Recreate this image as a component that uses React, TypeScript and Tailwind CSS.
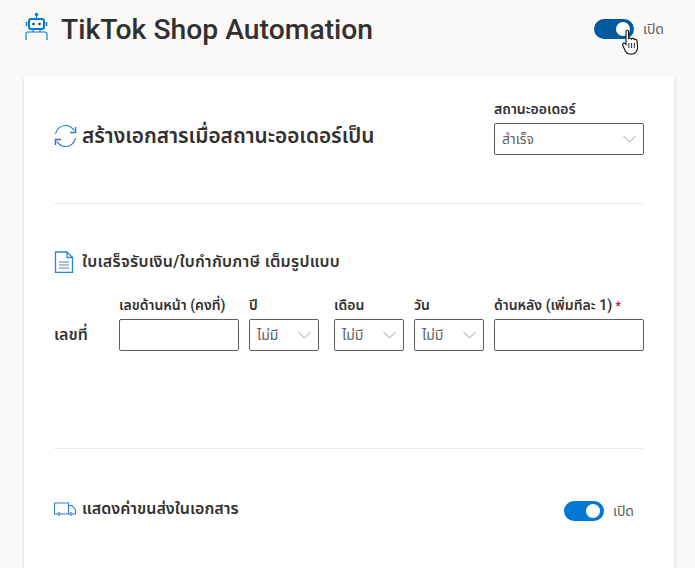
import React from 'react';

const FONT = "font-['Roboto','Noto_Sans_Thai','Noto_Sans',sans-serif]";

// Fluent-style chevron used by the dropdowns
function Chevron() {
  return (
    <svg width="13" height="8" viewBox="0 0 13 8" fill="none" className="shrink-0">
      <path d="M.5 1l6 6 6-6" stroke="#a19f9d" strokeWidth="1" />
    </svg>
  );
}

function Select({ value }: { value: string }) {
  return (
    <div className="h-8 flex items-center justify-between pl-[7px] pr-[7px] border border-[#605e5c] rounded-[2px] bg-white text-[14px] text-[#605e5c]">
      <span>{value}</span>
      <Chevron />
    </div>
  );
}

function Toggle({ color, label }: { color: string; label: string }) {
  return (
    <div className="flex items-center gap-[9px]">
      <div className={`w-10 h-5 rounded-full flex items-center justify-end pr-1 ${color}`}>
        <div className="w-3.5 h-3.5 rounded-full bg-white" />
      </div>
      <span className="text-[14px] leading-5 text-[#605e5c]">{label}</span>
    </div>
  );
}

function Field({ label, children, className = '' }: { label: React.ReactNode; children: React.ReactNode; className?: string }) {
  return (
    <div className={`flex flex-col ${className}`}>
      <div className="h-[23px] text-[14px] leading-[18px] font-semibold text-[#323130] whitespace-nowrap">{label}</div>
      {children}
    </div>
  );
}

export default function App() {
  return (
    <div className={`relative w-[695px] h-[568px] overflow-hidden bg-[#faf9f8] ${FONT}`}>
      {/* header */}
      <div className="h-[76px] pl-[25px] pr-[31px] flex items-start justify-between">
        <div className="flex items-start gap-[11px] pt-[10px]">
          <svg width="25" height="29" viewBox="0 0 25 29" fill="none" className="mt-[2px]">
            <circle cx="11.500" cy="2.500" r="1.700" fill="#0078d4" />
            <path d="M11.500 3v4" stroke="#0078d4" strokeWidth="1.200" />
            <rect x="4" y="7" width="15" height="10" rx="2" fill="none" stroke="#0078d4" strokeWidth="2" />
            <path d="M1.500 10v4M21.500 10v4" stroke="#0078d4" strokeWidth="1.500" />
            <circle cx="8.500" cy="12" r="1.300" fill="#1d3f72" />
            <circle cx="14.500" cy="12" r="1.300" fill="#1d3f72" />
            <path d="M1 28v-6a2 2 0 0 1 2-2h17a2 2 0 0 1 2 2v6M8 18v2M15 18v2" stroke="#0078d4" strokeWidth="1.100" />
          </svg>
          <h1 className="text-[28.300px] leading-10 font-medium text-[#323130]">TikTok Shop Automation</h1>
        </div>
        <div className="pt-[19px]">
          <Toggle color="bg-[#005a9e]" label="เปิด" />
        </div>
      </div>

      {/* cursor */}
      <svg width="20" height="26" viewBox="0 0 20 26" className="absolute left-[622px] top-[29px]">
        <path
          d="M4 2.500c0-1.600 2.600-1.600 2.600 0V10c.5-1.300 2.500-1.300 2.900 0 .6-1 2.500-.8 2.800.6 1-.7 2.700-.2 2.800 1.400l.4 5.500c.2 3.500-1.500 7.500-5 7.500H7.500c-2 0-3-1-4-2.600L.9 16.500c-.9-1.700 1-3 2.300-1.800l.8.8V2.500z"
          fill="#fff"
          stroke="#111"
          strokeWidth="1.100"
        />
        <path d="M6.800 14v5M9.600 14v5M12.300 14v5" stroke="#111" strokeWidth="0.900" />
      </svg>

      {/* card */}
      <div className="ml-6 w-[650px] h-[560px] bg-white px-[30px] shadow-[0_1.6px_3.6px_rgba(0,0,0,0.13),0_0.3px_0.9px_rgba(0,0,0,0.11)]">
        <div className="h-[127px] flex items-start justify-between border-b border-[#edebe9] box-content">
          <div className="flex items-center gap-[5px] mt-[44px]">
            <svg width="23" height="24" viewBox="0 0 23 24" fill="none">
              <path d="M1.500 10C2.500 5 6.500 1.500 11.500 1.500c3.500 0 6.500 1.700 8.500 5" stroke="#2b7cd3" strokeWidth="1.200" />
              <path d="M21.500 3v5.500H16" stroke="#2b7cd3" strokeWidth="1.500" />
              <path d="M21.500 14c-1 5-5 8.500-10 8.500-3.500 0-6.500-1.700-8.500-5" stroke="#3a68c8" strokeWidth="1.200" />
              <path d="M1.500 21v-5.500H7" stroke="#3a68c8" strokeWidth="1.500" />
            </svg>
            <h2 className="text-[20.800px] leading-8 font-semibold text-[#323130]">สร้างเอกสารเมื่อสถานะออเดอร์เป็น</h2>
          </div>
          <Field label="สถานะออเดอร์" className="w-[150px] mt-[24px] shrink-0">
            <Select value="สำเร็จ" />
          </Field>
        </div>

        <div className="h-[244px] border-b border-[#edebe9] box-content">
          <div className="flex items-center gap-2 pt-[46px] h-[70px]">
            <svg width="20" height="22" viewBox="0 0 20 22" fill="none">
              <path d="M1.500 1h11.500l5.500 5.500v15H1.500z" stroke="#1f8ad8" strokeWidth="1.300" fill="#fff" />
              <path d="M13 1v5.500h5.500" stroke="#1f8ad8" strokeWidth="1.300" />
              <path d="M5 11h10M5 14h10M5 17h10" stroke="#5b7fb5" strokeWidth="1.200" />
            </svg>
            <h3 className="text-[16px] tracking-[0.27px] leading-5 font-semibold text-[#323130]">ใบเสร็จรับเงิน/ใบกำกับภาษี เต็มรูปแบบ</h3>
          </div>
          <div className="flex items-end mt-[22px]">
            <div className="w-[65px] h-8 flex items-center text-[16px] font-semibold text-[#323130]">เลขที่</div>
            <Field label="เลขด้านหน้า (คงที่)" className="w-[120px] mr-[10px]">
              <div className="h-8 border border-[#605e5c] rounded-[2px] bg-white" />
            </Field>
            <Field label="ปี" className="w-[70px] mr-[15px]">
              <Select value="ไม่มี" />
            </Field>
            <Field label="เดือน" className="w-[70px] mr-[10px]">
              <Select value="ไม่มี" />
            </Field>
            <Field label="วัน" className="w-[70px] mr-[10px]">
              <Select value="ไม่มี" />
            </Field>
            <Field
              label={
                <>
                  ด้านหลัง (เพิ่มทีละ 1) <span className="text-[12px] text-[#a4262c]">*</span>
                </>
              }
              className="w-[150px]"
            >
              <div className="h-8 border border-[#605e5c] rounded-[2px] bg-white" />
            </Field>
          </div>
        </div>

        <div className="flex items-center justify-between pt-[50px] pr-[10px]">
          <div className="flex items-center gap-[6px] mb-[4px]">
            <svg width="22" height="14" viewBox="0 0 22 14" fill="none">
              <path d="M3 12H.5V1h14v11H7M14.500 3.500h3.500l3.500 4.500v4H19M14.500 12H15" stroke="#2b7cd3" strokeWidth="1.100" />
              <circle cx="5" cy="12" r="1.300" stroke="#3a68c8" strokeWidth="1" />
              <circle cx="17" cy="12" r="1.300" stroke="#3a68c8" strokeWidth="1" />
            </svg>
            <span className="text-[16px] leading-5 font-semibold text-[#323130]">แสดงค่าขนส่งในเอกสาร</span>
          </div>
          <Toggle color="bg-[#0078d4]" label="เปิด" />
        </div>
      </div>
    </div>
  );
}
